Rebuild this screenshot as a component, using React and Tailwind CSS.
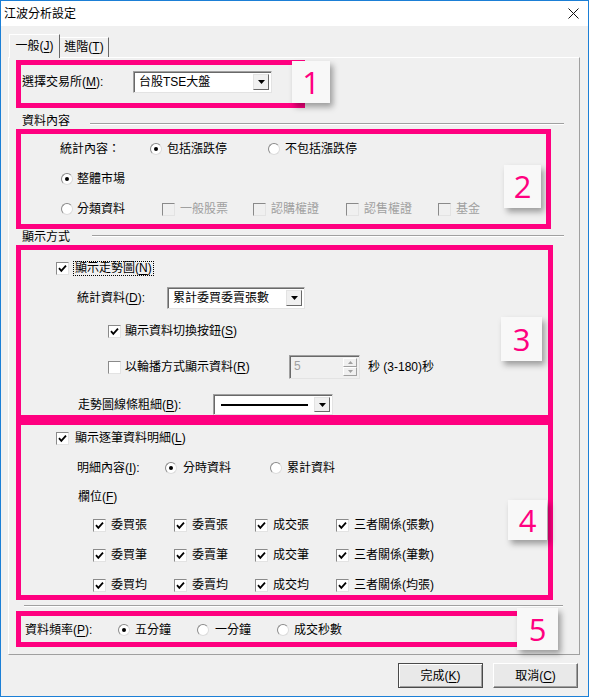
import React from "react";

function U({ children }) {
  return <span className="underline underline-offset-[2px] decoration-1">{children}</span>;
}

function Check({ checked = false, disabled = false }) {
  return (
    <span
      className={
        "relative inline-flex items-center justify-center w-[13px] h-[13px] shrink-0 border border-t-[#8a8a8a] border-l-[#8a8a8a] border-r-[#e3e3e3] border-b-[#e3e3e3] " +
        (disabled ? "bg-[#f0f0f0]" : "bg-white")
      }
    >
      {checked && (
        <svg width="11" height="11" viewBox="0 0 11 11">
          <path d="M2 5.2 L4.3 7.8 L9 2.6" fill="none" stroke="#000" strokeWidth="1.8" />
        </svg>
      )}
    </span>
  );
}

function Radio({ checked = false }) {
  return (
    <span className="inline-flex items-center justify-center w-[12px] h-[12px] shrink-0 rounded-full bg-white border border-t-[#8a8a8a] border-l-[#8a8a8a] border-r-[#dcdcdc] border-b-[#dcdcdc]">
      {checked && <span className="w-[4px] h-[4px] rounded-full bg-black" />}
    </span>
  );
}

function Tri() {
  return (
    <svg width="7" height="4" viewBox="0 0 7 4">
      <path d="M0 0 H7 L3.5 4 Z" fill="#000" />
    </svg>
  );
}

function Combo({ cls, children }) {
  return (
    <div
      className={
        "flex bg-white border border-t-[#a0a0a0] border-l-[#a0a0a0] border-r-[#e3e3e3] border-b-[#e3e3e3] shadow-[inset_1px_1px_0_#696969] p-[2px] " +
        cls
      }
    >
      <div className="flex-1 flex items-center pl-[3px] overflow-hidden whitespace-nowrap">{children}</div>
      <div className="w-[16px] h-full bg-[#f0f0f0] border border-t-[#e3e3e3] border-l-[#e3e3e3] border-r-[#696969] border-b-[#696969] flex items-center justify-center">
        <Tri />
      </div>
    </div>
  );
}

function Num({ n, cls }) {
  return (
    <div
      className={
        "absolute z-20 flex items-center justify-center bg-[#f8f8f8] shadow-[3px_4px_6px_rgba(0,0,0,0.35)] font-['Open_Sans',sans-serif] text-[31px] leading-none text-[#ff0080] " +
        cls
      }
    >
      {n}
    </div>
  );
}

const GRAY = "text-[#a0a0a0]";

export default function App() {
  return (
    <div className="w-[589px] h-[697px] flex flex-col border border-[#1b7fd6] bg-[#f0f0f0] text-black text-[12px] leading-[14px] font-['Liberation_Sans','Noto_Sans_CJK_TC',sans-serif] overflow-hidden">
      {/* Title bar */}
      <div className="h-[25px] shrink-0 bg-white flex items-center justify-between pl-[3px] pr-[9px]">
        <span className="pt-[1px]">江波分析設定</span>
        <svg width="11" height="11" viewBox="0 0 11 11">
          <path d="M0.5 0.5L10.5 10.5M10.5 0.5L0.5 10.5" stroke="#111" strokeWidth="1" />
        </svg>
      </div>

      <div className="px-[7px] flex flex-col">
        {/* Tabs */}
        <div className="h-[31px] flex items-end pl-[1px]">
          <div className="relative z-10 -mb-px h-[24px] w-[51px] bg-[#f0f0f0] border-l border-t border-r border-l-white border-t-white border-r-[#696969] flex justify-center pt-[4px]">
            <span>
              一般(<U>J</U>)
            </span>
          </div>
          <div className="h-[20px] w-[49px] border-t border-r border-t-white border-r-[#696969] flex justify-center pt-[2px]">
            <span>
              進階(<U>T</U>)
            </span>
          </div>
        </div>

        {/* Panel */}
        <div className="w-[572px] h-[598px] border border-t-white border-l-white border-r-[#a0a0a0] border-b-[#a0a0a0] flex flex-col">
          {/* Box 1 */}
          <div className="relative ml-[7px] mt-[2px] w-[289px] h-[48px] border-[5px] border-[#ff0080] shrink-0">
            <div className="flex items-center h-[22px] mt-[6px] pl-[1px]">
              <span className="w-[111px]">
                選擇交易所(<U>M</U>):
              </span>
              <Combo cls="w-[139px] h-[22px]">台股TSE大盤</Combo>
            </div>
            <Num n="1" cls="left-[271px] top-[-4px] w-[38px] h-[42px]" />
          </div>

          {/* Header 資料內容 */}
          <div className="flex h-[15px] mt-[6px] pl-[13px] pr-[15px] shrink-0">
            <span className="w-[68px] leading-[15px]">資料內容</span>
            <div className="flex-1 mt-[9px] h-[2px] border-t border-t-[#a0a0a0] border-b border-b-white" />
          </div>

          {/* Box 2 */}
          <div className="relative ml-[7px] w-[535px] h-[100px] border-[5px] border-[#ff0080] shrink-0">
            <div className="flex items-center h-[30px] pl-[39px]">
              <span className="w-[90px]">統計內容：</span>
              <span className="w-[118px] flex items-center gap-[5px]">
                <Radio checked />
                包括漲跌停
              </span>
              <span className="flex items-center gap-[5px]">
                <Radio />
                不包括漲跌停
              </span>
            </div>
            <div className="flex items-center h-[30px] pl-[40px] gap-[4px]">
              <Radio checked />
              整體市場
            </div>
            <div className="flex items-center h-[30px] pl-[40px]">
              <span className="w-[101px] flex items-center gap-[4px]">
                <Radio />
                分類資料
              </span>
              <span className={"w-[91px] flex items-center gap-[5px] " + GRAY}>
                <Check disabled />
                一般股票
              </span>
              <span className={"w-[93px] flex items-center gap-[5px] " + GRAY}>
                <Check disabled />
                認購權證
              </span>
              <span className={"w-[92px] flex items-center gap-[5px] " + GRAY}>
                <Check disabled />
                認售權證
              </span>
              <span className={"flex items-center gap-[5px] " + GRAY}>
                <Check disabled />
                基金
              </span>
            </div>
            <Num n="2" cls="left-[483px] top-[31px] w-[37px] h-[43px]" />
          </div>

          {/* Header 顯示方式 */}
          <div className="flex h-[16px] pl-[13px] pr-[15px] shrink-0">
            <span className="w-[70px] leading-[16px]">顯示方式</span>
            <div className="flex-1 mt-[6px] h-[2px] border-t border-t-[#a0a0a0] border-b border-b-white" />
          </div>

          {/* Box 3 */}
          <div className="relative ml-[7px] w-[537px] h-[175px] border-[5px] border-[#ff0080] shrink-0">
            <div className="flex items-center h-[36px] pl-[35px] gap-[4px]">
              <Check checked />
              <span className="border border-dotted border-black px-[1px] leading-[13px]">
                顯示走勢圖(<U>N</U>)
              </span>
            </div>
            <div className="flex items-center h-[24px] pl-[56px]">
              <span className="w-[90px]">
                統計資料(<U>D</U>):
              </span>
              <Combo cls="w-[138px] h-[22px]">累計委買委賣張數</Combo>
            </div>
            <div className="flex items-center h-[42px] pl-[87px] gap-[4px]">
              <Check checked />
              <span>
                顯示資料切換按鈕(<U>S</U>)
              </span>
            </div>
            <div className="flex items-center h-[30px] pl-[87px]">
              <Check />
              <span className="w-[168px] pl-[4px]">
                以輪播方式顯示資料(<U>R</U>)
              </span>
              <div className="w-[71px] h-[24px] flex bg-[#f0f0f0] border border-t-[#a0a0a0] border-l-[#a0a0a0] border-r-[#e3e3e3] border-b-[#e3e3e3] shadow-[inset_1px_1px_0_#696969] p-[2px]">
                <div className="flex-1 text-[#a0a0a0] pl-[2px] leading-[16px]">5</div>
                <div className="w-[14px] flex flex-col">
                  <div className="flex-1 border border-t-white border-l-white border-r-[#a0a0a0] border-b-[#a0a0a0] flex items-center justify-center">
                    <svg width="5" height="3" viewBox="0 0 5 3">
                      <path d="M0 3 H5 L2.5 0 Z" fill="#a0a0a0" />
                    </svg>
                  </div>
                  <div className="flex-1 border border-t-white border-l-white border-r-[#a0a0a0] border-b-[#a0a0a0] flex items-center justify-center">
                    <svg width="5" height="3" viewBox="0 0 5 3">
                      <path d="M0 0 H5 L2.5 3 Z" fill="#a0a0a0" />
                    </svg>
                  </div>
                </div>
              </div>
              <span className="ml-[8px]">秒 (3-180)秒</span>
            </div>
            <div className="flex items-center h-[21px] mt-[12px] pl-[57px]">
              <span className="w-[135px]">
                走勢圖線條粗細(<U>B</U>):
              </span>
              <Combo cls="w-[120px] h-[21px]">
                <div className="w-[87px] h-[2px] bg-black ml-[2px]" />
              </Combo>
            </div>
            <Num n="3" cls="left-[480px] top-[67px] w-[41px] h-[44px]" />
          </div>

          {/* Box 4 */}
          <div className="relative ml-[7px] w-[537px] h-[180px] border-[5px] border-[#ff0080] shrink-0">
            <div className="flex items-center h-[26px] pl-[35px] gap-[6px]">
              <Check checked />
              <span>
                顯示逐筆資料明細(<U>L</U>)
              </span>
            </div>
            <div className="flex items-center h-[34px] pl-[56px]">
              <span className="w-[88px]">
                明細內容(<U>I</U>):
              </span>
              <span className="w-[105px] flex items-center gap-[6px]">
                <Radio checked />
                分時資料
              </span>
              <span className="flex items-center gap-[5px]">
                <Radio />
                累計資料
              </span>
            </div>
            <div className="flex items-center h-[24px] pl-[57px]">
              <span>
                欄位(<U>F</U>)
              </span>
            </div>
            <div className="mt-[6px] pl-[72px] grid grid-cols-[81px_81px_81px_auto] gap-y-[10px]">
              {[
                ["委買張", "委賣張", "成交張", "三者關係(張數)"],
                ["委買筆", "委賣筆", "成交筆", "三者關係(筆數)"],
                ["委買均", "委賣均", "成交均", "三者關係(均張)"],
              ].flat().map((t, i) => (
                <span key={i} className="flex items-center h-[20px] gap-[5px]">
                  <Check checked />
                  {t}
                </span>
              ))}
            </div>
            <Num n="4" cls="left-[487px] top-[75px] w-[39px] h-[40px]" />
          </div>

          {/* Etched line */}
          <div className="ml-[15px] w-[539px] mt-[5px] h-[2px] border-t border-t-[#a0a0a0] border-b border-b-white shrink-0" />

          {/* Box 5 */}
          <div className="relative ml-[7px] mt-[4px] w-[529px] h-[36px] border-[5px] border-[#ff0080] shrink-0">
            <div className="flex items-center h-full pl-[4px] pt-[2px]">
              <span className="w-[93px]">
                資料頻率(<U>P</U>):
              </span>
              <span className="w-[79px] flex items-center gap-[5px]">
                <Radio checked />
                五分鐘
              </span>
              <span className="w-[80px] flex items-center gap-[6px]">
                <Radio />
                一分鐘
              </span>
              <span className="flex items-center gap-[5px]">
                <Radio />
                成交秒數
              </span>
            </div>
            <Num n="5" cls="left-[496px] top-[-8px] w-[41px] h-[42px]" />
          </div>
        </div>

        {/* Buttons */}
        <div className="flex justify-end gap-[10px] mt-[8px] pr-[3px]">
          <div className="w-[85px] h-[25px] flex items-center justify-center bg-[#e9e9e9] border border-[#4a4a4a] shadow-[inset_1px_1px_0_#ffffff,inset_-1px_-1px_0_#a0a0a0]">
            <span>
              完成(<U>K</U>)
            </span>
          </div>
          <div className="w-[85px] h-[25px] flex items-center justify-center bg-[#e9e9e9] border border-t-white border-l-white border-r-[#696969] border-b-[#696969] shadow-[inset_-1px_-1px_0_#a0a0a0]">
            <span>
              取消(<U>C</U>)
            </span>
          </div>
        </div>
      </div>
    </div>
  );
}
